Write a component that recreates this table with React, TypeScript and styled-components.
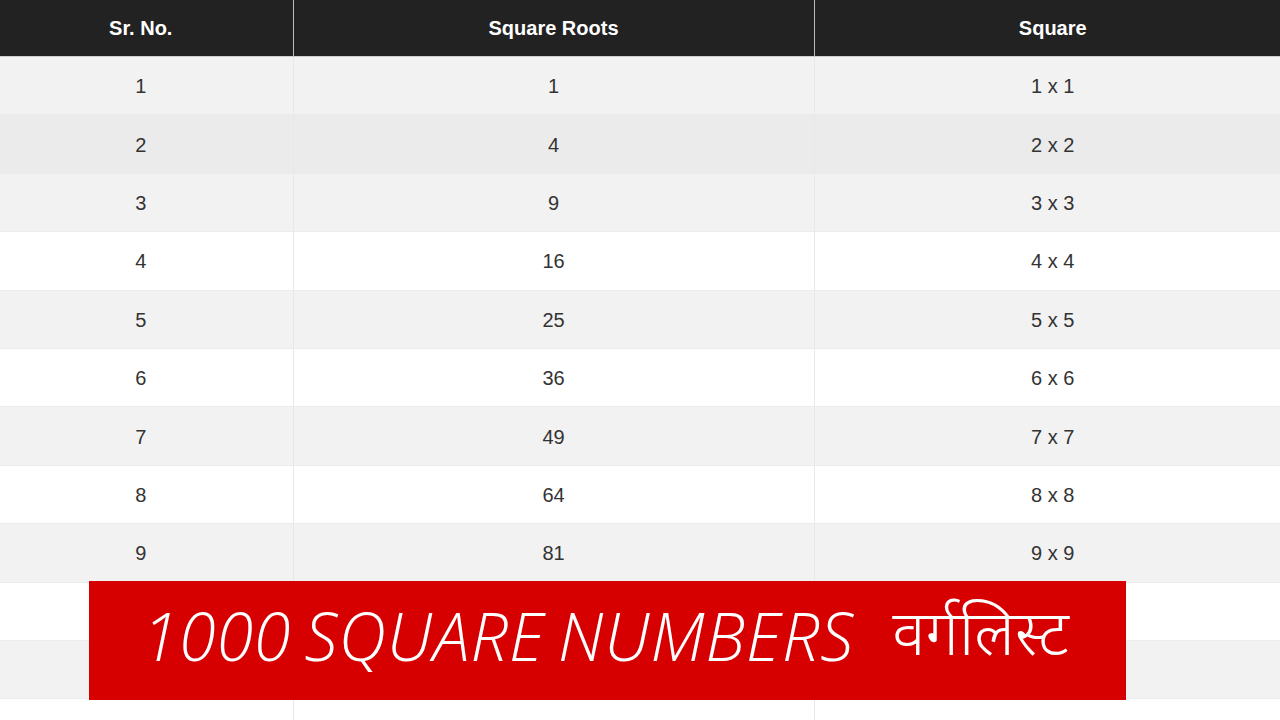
import styled, { createGlobalStyle } from "styled-components";

const GlobalStyle = createGlobalStyle`
  html, body {
    margin: 0;
    padding: 0;
    background: #ffffff;
    overflow: hidden;
  }
  body {
    font-family: "Liberation Sans", Arial, sans-serif;
  }
`;

const Page = styled.div`
  position: relative;
  width: 1280px;
  height: 720px;
  overflow: hidden;
`;

const Table = styled.table`
  width: 1302px;
  margin-left: -11px;
  border-collapse: collapse;
  table-layout: fixed;
  font-size: 20px;
  color: #333333;
`;

const HeadCell = styled.th`
  height: 56px;
  padding: 0;
  background: #222222;
  color: #ffffff;
  font-weight: 700;
  font-size: 20px;
  text-align: center;
  border-left: 1px solid #bdbdbd;
  border-bottom: 1px solid #cfcfcf;
  &:first-child {
    border-left: none;
  }
`;

const Row = styled.tr<{ $tone: "grey" | "white" | "hover" }>`
  height: 58.4px;
  background: ${({ $tone }) =>
    $tone === "hover" ? "#ebebeb" : $tone === "grey" ? "#f2f2f2" : "#ffffff"};
`;

const Cell = styled.td`
  padding: 2px 0 0;
  text-align: center;
  border-left: 1px solid #e8e8e8;
  border-bottom: 1px solid #ececec;
  &:first-child {
    border-left: none;
  }
`;

const Banner = styled.div`
  position: absolute;
  left: 89px;
  top: 581px;
  width: 1037px;
  height: 119px;
  background: #d60000;
  display: flex;
  align-items: center;
  padding: 0 0 12px 53px;
  box-sizing: border-box;
  color: #ffffff;
`;

const BannerTitle = styled.span`
  font-family: "Open Sans", "Noto Sans", sans-serif;
  font-style: italic;
  font-weight: 300;
  font-size: 66px;
  letter-spacing: 1px;
  word-spacing: -5px;
  white-space: nowrap;
`;

const BannerHindi = styled.span`
  font-family: "Noto Sans Devanagari", "Noto Sans", "DejaVu Sans", sans-serif;
  font-weight: 300;
  font-size: 63px;
  margin: 10px 0 0 38px;
  white-space: nowrap;
`;

const rows = Array.from({ length: 12 }, (_, i) => i + 1);

export default function App() {
  return (
    <Page>
      <GlobalStyle />
      <Table>
        <colgroup>
          <col style={{ width: 304 }} />
          <col style={{ width: 521 }} />
          <col style={{ width: 477 }} />
        </colgroup>
        <thead>
          <tr>
            <HeadCell>Sr. No.</HeadCell>
            <HeadCell>Square Roots</HeadCell>
            <HeadCell>Square</HeadCell>
          </tr>
        </thead>
        <tbody>
          {rows.map((n) => (
            <Row
              key={n}
              $tone={n === 2 ? "hover" : n === 3 || n % 2 === 1 ? "grey" : "white"}
            >
              <Cell>{n <= 9 ? n : ""}</Cell>
              <Cell>{n <= 9 ? n * n : ""}</Cell>
              <Cell>{n <= 9 ? `${n} x ${n}` : ""}</Cell>
            </Row>
          ))}
        </tbody>
      </Table>
      <Banner>
        <BannerTitle>1000 SQUARE NUMBERS</BannerTitle>
        <BannerHindi>वर्गलिस्ट</BannerHindi>
      </Banner>
    </Page>
  );
}
